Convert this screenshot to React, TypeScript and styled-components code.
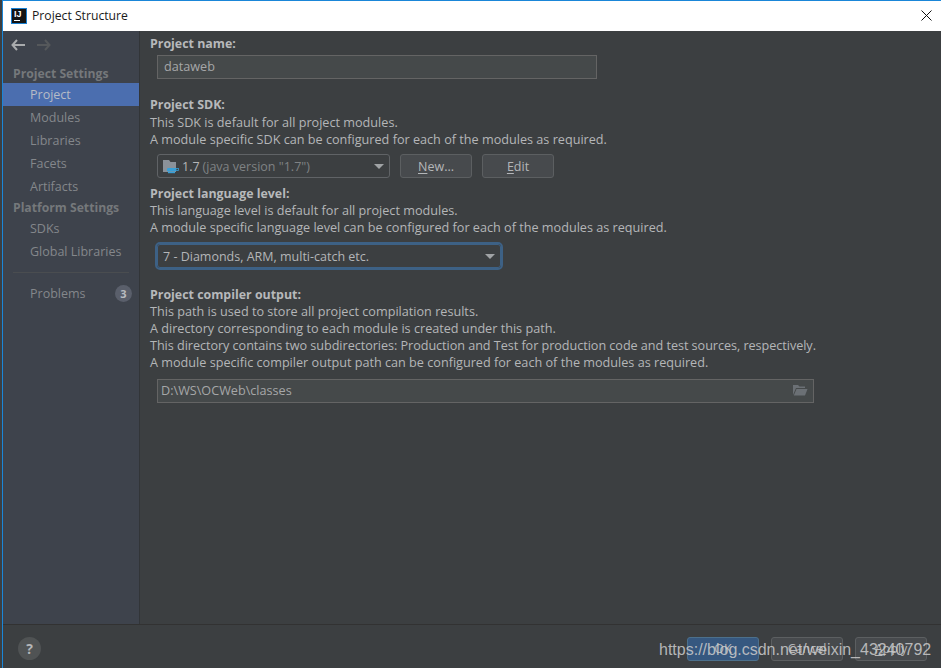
import styled, { createGlobalStyle } from 'styled-components';
import { ReactNode } from 'react';

const GlobalStyle = createGlobalStyle`
  html, body {
    margin: 0;
    padding: 0;
    background: #3c3f41;
  }
  * {
    box-sizing: border-box;
  }
`;

const Page = styled.div`
  position: relative;
  width: 941px;
  height: 668px;
  padding-left: 2px;
  background: #3c3f41;
  overflow: hidden;
  font-family: 'Open Sans', 'Noto Sans', sans-serif;
  font-size: 12.5px;
  color: #b4b6b8;
`;

const Window = styled.div`
  display: flex;
  flex-direction: column;
  height: 100%;
  border-top: 1px solid #1a86d8;
  border-left: 1px solid #1a86d8;
`;

const TitleBar = styled.div`
  display: flex;
  align-items: center;
  flex: 0 0 30px;
  padding: 0 9px 1px 8px;
  gap: 5px;
  background: #fff;
  color: #1a1a1a;
  font-size: 12.2px;
`;

const TitleText = styled.span`
  flex: 1;
`;

const Body = styled.div`
  display: flex;
  height: 594px;
  border-bottom: 1px solid #323232;
`;

const Sidebar = styled.nav`
  display: flex;
  flex-direction: column;
  width: 137px;
  background: #3e434c;
  border-right: 1px solid #323538;
`;

const NavArrows = styled.div`
  display: flex;
  align-items: center;
  gap: 12px;
  height: 29px;
  padding: 0 0 2px 8px;
`;

const Group = styled.div<{ $top?: number }>`
  height: 19px;
  line-height: 19px;
  margin-top: ${(p) => p.$top ?? 0}px;
  padding-left: 10px;
  font-size: 12.2px;
  font-weight: 700;
  color: #75787b;
`;

const NavItem = styled.div<{ $active?: boolean }>`
  display: flex;
  align-items: center;
  justify-content: space-between;
  height: 23px;
  padding: 0 7px 0 27px;
  background: ${(p) => (p.$active ? '#4b6eaf' : 'transparent')};
  color: ${(p) => (p.$active ? '#b6bcc6' : '#84878b')};
`;

const Separator = styled.div`
  height: 1px;
  margin: 9px 10px 9px;
  background: #4a4d50;
`;

const Badge = styled.span`
  display: flex;
  align-items: center;
  justify-content: center;
  width: 17px;
  height: 17px;
  border-radius: 50%;
  background: #5a5f6b;
  color: #b9bcc0;
  font-size: 11px;
  font-weight: 700;
`;

const Content = styled.main`
  display: flex;
  flex-direction: column;
  flex: 1;
  padding: 3px 0 0 10px;
  background: #3c3f41;
  font-size: 12.65px;
`;

const Heading = styled.div<{ $top?: number; $flush?: boolean }>`
  height: 18px;
  line-height: 18px;
  margin-top: ${(p) => p.$top ?? 0}px;
  padding-top: ${(p) => (p.$flush ? 0 : 1)}px;
  font-size: 12.4px;
  font-weight: 700;
  color: #b7b9bb;
`;

const Line = styled.div<{ $tight?: boolean }>`
  height: 17px;
  line-height: 17px;
  color: #b4b6b8;
  letter-spacing: ${(p) => (p.$tight ? '-0.05px' : 'normal')};
`;

const Row = styled.div<{ $top?: number }>`
  display: flex;
  align-items: center;
  gap: 10px;
  margin-top: ${(p) => p.$top ?? 0}px;
  margin-left: 7px;
`;

const Field = styled.div<{ $width: number; $inset: number }>`
  display: flex;
  align-items: center;
  justify-content: space-between;
  width: ${(p) => p.$width}px;
  height: 24px;
  padding: 0 5px 2px ${(p) => p.$inset}px;
  background: #45494a;
  border: 1px solid #646464;
  color: #a5a7a8;
`;

const Select = styled.div<{ $width: number; $focused?: boolean }>`
  display: flex;
  align-items: center;
  justify-content: space-between;
  width: ${(p) => p.$width}px;
  height: 24px;
  padding: 0 5px 0 5px;
  background: #3c3f41;
  border: 1px solid #606366;
  border-radius: 3px;
  color: #b4b6b8;
  font-size: 12.5px;
  ${(p) =>
    p.$focused &&
    `
    outline: 2px solid #3d6185;
    outline-offset: 0;
    border: 1px solid #3d6185;
  `}
`;

const SelectLabel = styled.span`
  display: flex;
  align-items: center;
  gap: 3px;
`;

const Muted = styled.span`
  color: #7f8284;
`;

const Caret = styled.span`
  width: 0;
  height: 0;
  border-left: 5px solid transparent;
  border-right: 5px solid transparent;
  border-top: 5px solid #a0a3a5;
`;

const Button = styled.button<{ $primary?: boolean }>`
  width: 72px;
  height: 24px;
  padding: 0;
  font: inherit;
  font-size: 12.5px;
  color: #b4b6b8;
  background: ${(p) => (p.$primary ? '#365880' : '#474a4d')};
  border: 1px solid ${(p) => (p.$primary ? '#4c708c' : '#5c5f61')};
  border-radius: 3px;

  u {
    text-underline-offset: 2px;
  }
`;

const Footer = styled.footer`
  display: flex;
  align-items: center;
  justify-content: flex-end;
  flex: 1;
  gap: 12px;
  padding: 4px 14px 0 15px;
  background: #3c3f41;
`;

const Help = styled.div`
  display: flex;
  align-items: center;
  justify-content: center;
  width: 23px;
  height: 23px;
  margin-right: auto;
  border-radius: 50%;
  background: #505354;
  color: #b4b6b8;
  font-weight: 700;
  font-size: 14px;
`;

const Watermark = styled.div`
  position: absolute;
  left: 659px;
  top: 639px;
  font-family: 'Liberation Sans', Arial, sans-serif;
  font-size: 16px;
  line-height: 21px;
  color: rgba(205, 205, 205, 0.85);
  white-space: nowrap;
`;

function Arrow({ color, flip }: { color: string; flip?: boolean }) {
  return (
    <svg width="14" height="12" viewBox="0 0 14 12" style={flip ? { transform: 'scaleX(-1)' } : undefined}>
      <path d="M6 1 1.500 6 6 11M2 6h12" fill="none" stroke={color} strokeWidth="2" />
    </svg>
  );
}

function AppLogo() {
  return (
    <svg width="16" height="16" viewBox="0 0 16 16">
      <rect x="0.5" y="0.5" width="15" height="15" fill="#141414" stroke="#1a7fd0" />
      <text x="3" y="9" fontSize="9" fontWeight="700" fill="#fff" fontFamily="Liberation Sans">IJ</text>
      <rect x="3" y="12" width="6" height="1" fill="#fff" />
    </svg>
  );
}

function CloseIcon() {
  return (
    <svg width="11" height="11" viewBox="0 0 11 11">
      <path d="M.5.5l10 10M10.500.5l-10 10" stroke="#111" strokeWidth="1" />
    </svg>
  );
}

function SdkIcon() {
  return (
    <svg width="16" height="16" viewBox="0 0 16 16">
      <path d="M0 2h6l1.500 2H13v10H0z" fill="#8a9199" />
      <rect x="4" y="10" width="9" height="3.500" rx="1" fill="#389fd6" />
      <rect x="13" y="10.500" width="2.500" height="2" fill="none" stroke="#389fd6" strokeWidth="0.8" />
      <rect x="5" y="14" width="7" height="1.200" fill="#389fd6" />
    </svg>
  );
}

function FolderOpenIcon() {
  return (
    <svg width="16" height="12" viewBox="0 0 16 12">
      <path d="M1 1h5l1.500 1.500H13V4H4L1 11z" fill="#6b7075" />
      <path d="M4.500 5H15.500L13 11.500H1.800z" fill="#6b7075" />
    </svg>
  );
}

function Hotkey({ char, rest }: { char: string; rest: string }): ReactNode {
  return (
    <>
      <u>{char}</u>
      {rest}
    </>
  );
}

export default function App() {
  return (
    <Page>
      <GlobalStyle />
      <Window>
        <TitleBar>
          <AppLogo />
          <TitleText>Project Structure</TitleText>
          <CloseIcon />
        </TitleBar>
        <Body>
          <Sidebar>
            <NavArrows>
              <Arrow color="#a9abad" />
              <Arrow color="#55585b" flip />
            </NavArrows>
            <Group $top={4}>Project Settings</Group>
            <NavItem $active>Project</NavItem>
            <NavItem>Modules</NavItem>
            <NavItem>Libraries</NavItem>
            <NavItem>Facets</NavItem>
            <NavItem>Artifacts</NavItem>
            <Group>Platform Settings</Group>
            <NavItem>SDKs</NavItem>
            <NavItem>Global Libraries</NavItem>
            <Separator />
            <NavItem>
              Problems
              <Badge>3</Badge>
            </NavItem>
          </Sidebar>
          <Content>
            <Heading>Project name:</Heading>
            <Row $top={3}>
              <Field $width={440} $inset={6}>dataweb</Field>
            </Row>
            <Heading $top={17} $flush>Project SDK:</Heading>
            <Line>This SDK is default for all project modules.</Line>
            <Line>A module specific SDK can be configured for each of the modules as required.</Line>
            <Row $top={6}>
              <Select $width={233}>
                <SelectLabel>
                  <SdkIcon />
                  1.7 <Muted>(java version "1.7")</Muted>
                </SelectLabel>
                <Caret />
              </Select>
              <Button>
                <Hotkey char="N" rest="ew..." />
              </Button>
              <Button>
                <Hotkey char="E" rest="dit" />
              </Button>
            </Row>
            <Heading $top={6}>Project language level:</Heading>
            <Line>This language level is default for all project modules.</Line>
            <Line>A module specific language level can be configured for each of the modules as required.</Line>
            <Row $top={8}>
              <Select $width={344} $focused>
                7 - Diamonds, ARM, multi-catch etc.
                <Caret />
              </Select>
            </Row>
            <Heading $top={17}>Project compiler output:</Heading>
            <Line>This path is used to store all project compilation results.</Line>
            <Line>A directory corresponding to each module is created under this path.</Line>
            <Line $tight>This directory contains two subdirectories: Production and Test for production code and test sources, respectively.</Line>
            <Line>A module specific compiler output path can be configured for each of the modules as required.</Line>
            <Row $top={8}>
              <Field $width={657} $inset={3}>
                D:\WS\OCWeb\classes
                <FolderOpenIcon />
              </Field>
            </Row>
          </Content>
        </Body>
        <Footer>
          <Help>?</Help>
          <Button $primary>OK</Button>
          <Button>Cancel</Button>
          <Button>
            <Hotkey char="A" rest="pply" />
          </Button>
        </Footer>
      </Window>
      <Watermark>https://blog.csdn.net/weixin_43240792</Watermark>
    </Page>
  );
}
